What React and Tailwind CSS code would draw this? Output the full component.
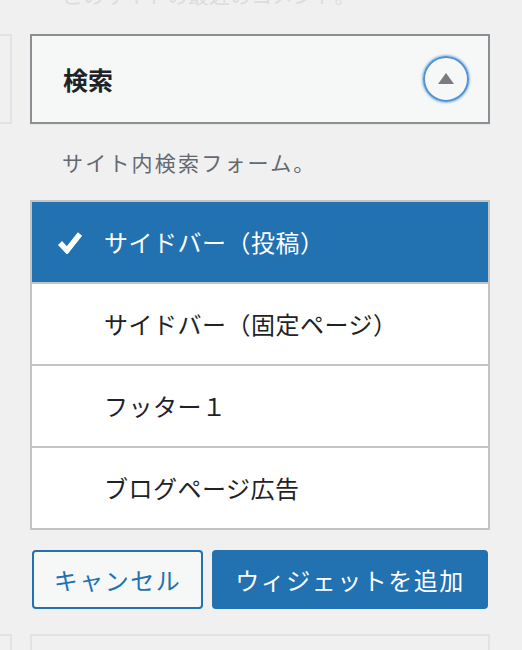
const areas = ["サイドバー（投稿）", "サイドバー（固定ページ）", "フッター１", "ブログページ広告"];

const font = { fontFamily: '"Noto Sans CJK JP", "Noto Sans", sans-serif' };

const CheckMark = () => (
    <svg width="26" height="24" viewBox="0 0 26 24" className="shrink-0">
        <polyline points="3,13 10,20.5 23,4" fill="none" stroke="#fff" strokeWidth="5.5" strokeLinejoin="miter" />
    </svg>
);

export default function App() {
    return (
        <div className="w-[522px] h-[650px] overflow-hidden bg-[#f0f0f1] flex items-start" style={font}>
            {/* neighbour column, mostly off screen */}
            <div className="w-[12px] shrink-0 flex flex-col">
                <div className="shrink-0 mt-[34px] h-[90px] border-y-2 border-r-2 border-[#e3e3e4]" />
                <div className="shrink-0 mt-[510px] h-[60px] border-t-2 border-r-2 border-[#e3e3e4]" />
            </div>

            <div className="ml-[18px] w-[460px] shrink-0 flex flex-col">
                <p className="shrink-0 -mt-[17px] h-[22px] leading-[22px] text-[21px] text-[#dcdcde] pl-[32px] whitespace-nowrap">
                    このサイトの最近のコメント。
                </p>

                {/* widget header */}
                <div className="shrink-0 mt-[29px] h-[90px] border-2 border-[#8c8f94] bg-[#f6f7f7] flex items-center justify-between pl-[31px] pr-[19px] shadow-[0_1px_1px_rgba(0,0,0,0.04)]">
                    <h3 className="text-[25px] font-bold text-[#1d2327] leading-none">検索</h3>
                    <button className="w-[46px] h-[46px] rounded-full border-2 border-[#4f94d4] shadow-[0_0_2px_1px_rgba(79,148,212,0.6)] flex items-center justify-center">
                        <svg width="18" height="12" viewBox="0 0 18 12">
                            <polygon points="9,0 17,11 1,11" fill="#787c82" />
                        </svg>
                    </button>
                </div>

                <p className="shrink-0 mt-[23px] h-[30px] leading-[30px] text-[21px] text-[#646970] pl-[32px] tracking-[2.2px]">
                    サイト内検索フォーム。
                </p>

                {/* area chooser */}
                <ul className="shrink-0 mt-[23px] border-2 border-[#c3c4c7] bg-white">
                    {areas.map((name, i) => (
                        <li
                            key={name}
                            className={
                                i === 0
                                    ? "h-[80px] flex items-center bg-[#2271b1] text-white pl-[25px]"
                                    : "h-[82px] flex items-center border-t-2 border-[#c3c4c7] text-[#1d2327] pl-[72px]"
                            }
                        >
                            {i === 0 && (
                                <span className="w-[47px] flex">
                                    <CheckMark />
                                </span>
                            )}
                            <span className="text-[24px] tracking-[0.5px] leading-none whitespace-nowrap">{name}</span>
                        </li>
                    ))}
                </ul>

                <div className="shrink-0 mt-[20px] px-[2px] flex gap-[9px]">
                    <button className="w-[171px] h-[59px] rounded-[4px] border-2 border-[#2271b1] bg-[#f6f7f7] text-[#2271b1] text-[24px] tracking-[1.5px]">
                        キャンセル
                    </button>
                    <button className="flex-1 h-[59px] rounded-[4px] bg-[#2271b1] text-white text-[24px] tracking-[1.5px]">
                        ウィジェットを追加
                    </button>
                </div>

                <div className="shrink-0 mt-[25px] h-[60px] border-2 border-[#e3e3e4]" />
            </div>
        </div>
    );
}
